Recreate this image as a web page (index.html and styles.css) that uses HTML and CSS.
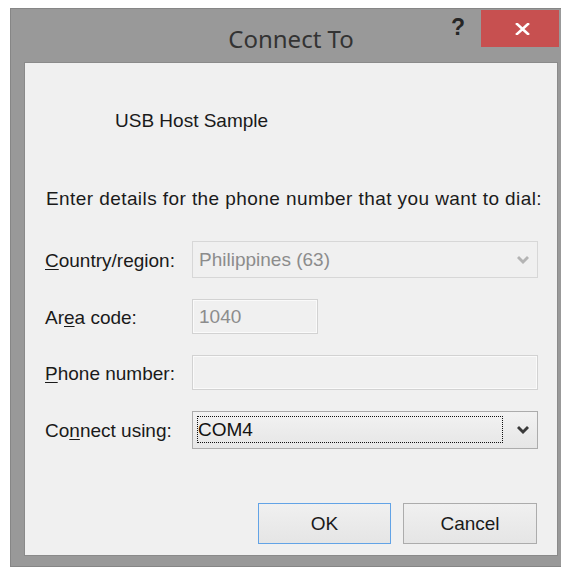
FILE: index.html
```html
<!DOCTYPE html>
<html lang="en">
<head>
<meta charset="utf-8">
<title>Connect To</title>
<link rel="stylesheet" href="styles.css">
</head>
<body>
<div class="window">
  <div class="titlebar">
    <div class="spacer"></div>
    <div class="title">Connect To</div>
    <div class="controls">
      <span class="help">?</span>
      <span class="close">
        <svg width="15" height="12" viewBox="0 0 15 12"><path d="M2 1 L13 11 M13 1 L2 11" stroke="#fff" stroke-width="2.6" stroke-linecap="square" fill="none"/></svg>
      </span>
    </div>
  </div>
  <div class="client">
    <div class="entry-name">USB Host Sample</div>
    <p class="prompt">Enter details for the phone number that you want to dial:</p>
    <div class="form">
      <label class="lbl"><u>C</u>ountry/region:</label>
      <div class="combo disabled">
        <span class="value">Philippines (63)</span>
        <span class="arrow"><svg width="12" height="8" viewBox="0 0 12 8"><path d="M0 2 L2 0 L6 4 L10 0 L12 2 L6 8 Z" fill="#b4b4b4"/></svg></span>
      </div>
      <label class="lbl">Ar<u>e</u>a code:</label>
      <div class="field short"><span class="value">1040</span></div>
      <label class="lbl"><u>P</u>hone number:</label>
      <div class="field"></div>
      <label class="lbl">Co<u>n</u>nect using:</label>
      <div class="combo active">
        <span class="focus">COM4</span>
        <span class="arrow"><svg width="12" height="8" viewBox="0 0 12 8"><path d="M0 2 L2 0 L6 4 L10 0 L12 2 L6 8 Z" fill="#3a3a3a"/></svg></span>
      </div>
    </div>
    <div class="buttons">
      <button class="btn default">OK</button>
      <button class="btn">Cancel</button>
    </div>
  </div>
</div>
</body>
</html>
```

FILE: styles.css
```css
html, body {
  margin: 0;
  padding: 0;
}

html {
  width: 561px;
  height: 568px;
  overflow: hidden;
}

body {
  background: #ffffff;
  width: 561px;
  height: 568px;
  overflow: hidden;
  font-family: "Liberation Sans", Arial, sans-serif;
  font-size: 19px;
  color: #1a1a1a;
}

/* window frame; its right edge runs past the view, so only a sliver shows */
.window {
  margin: 8px 0 0 10px;
  width: 534px;
  padding: 0 3px 10px 13px;
  background: #999999;
  border: 1px solid #868686;
  border-right: 0;
}

.titlebar {
  margin: 0 -3px 0 -13px;
  height: 53px;
  display: grid;
  grid-template-columns: 1fr auto 1fr;
}

.title {
  font-family: "Noto Sans", "Open Sans", sans-serif;
  font-size: 24px;
  color: #333333;
  line-height: 47px;
  padding-top: 6px;
  padding-left: 10px;
  white-space: nowrap;
}

.controls {
  justify-self: end;
  display: flex;
  align-items: flex-start;
  padding-right: 2px;
  margin-top: 1px;
}

.help {
  width: 24px;
  margin-right: 11px;
  text-align: center;
  font-weight: bold;
  font-size: 23px;
  line-height: 35px;
  color: #262626;
}

.close {
  width: 78px;
  height: 37px;
  background: #c75050;
  display: flex;
  align-items: center;
  justify-content: center;
}

.close svg {
  display: block;
  margin-left: 4px;
}

/* dialog body */
.client {
  box-sizing: border-box;
  height: 494px;
  background: #f0f0f0;
  border: 1px solid #8a8a8a;
  padding: 0 19px 0 20px;
  display: flex;
  flex-direction: column;
}

.entry-name {
  margin: 47px 0 0 70px;
  line-height: 22px;
}

.prompt {
  margin: 56px 0 0 1px;
  line-height: 22px;
  letter-spacing: 0.42px;
  white-space: nowrap;
}

.form {
  margin-top: 31px;
  display: grid;
  grid-template-columns: 147px 346px;
  grid-template-rows: 37px 35px 35px 38px;
  row-gap: 21px;
}

.lbl {
  align-self: center;
  line-height: 22px;
  white-space: nowrap;
  padding-top: 2px;
}

.lbl u {
  text-underline-offset: 2px;
}

.combo,
.field {
  box-sizing: border-box;
  display: flex;
  align-items: center;
}

.value {
  padding-left: 6px;
  color: #8c8c8c;
  line-height: 22px;
}

.combo.disabled {
  border: 1px solid #d7d7d7;
  background: #f0f0f0;
}

.combo.disabled .value {
  flex: 1;
}

.arrow {
  width: 29px;
  display: flex;
  justify-content: center;
  align-items: center;
}

.arrow svg {
  display: block;
}

.field {
  border: 1px solid #d2d2d2;
  box-shadow: inset 0 0 0 1px #fafafa;
  background: #f0f0f0;
}

.field.short {
  width: 126px;
}

.combo.active {
  border: 1px solid #acacac;
  background: linear-gradient(#f2f2f2, #e6e6e6);
}

.focus {
  flex: 1;
  box-sizing: border-box;
  height: 27px;
  margin: 0 5px 2px 4px;
  border: 1px dotted #111111;
  line-height: 25px;
  color: #111111;
  padding-left: 0;
}

.buttons {
  margin-top: 54px;
  margin-right: 1px;
  display: flex;
  justify-content: flex-end;
  gap: 12px;
}

.btn {
  width: 134px;
  height: 41px;
  font-family: "Liberation Sans", Arial, sans-serif;
  font-size: 19px;
  color: #1a1a1a;
  background: linear-gradient(#f0f0f0, #e5e5e5);
  border: 1px solid #acacac;
  padding: 0;
  border-radius: 0;
}

.btn.default {
  width: 133px;
  border-color: #62a3e6;
}
```
